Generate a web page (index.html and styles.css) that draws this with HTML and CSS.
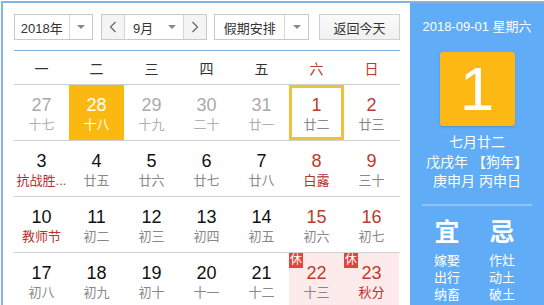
FILE: index.html
```html
<!DOCTYPE html>
<html lang="zh-CN">
<head>
  <meta charset="UTF-8">
  <title>万年历</title>
  <link rel="stylesheet" href="styles.css">
</head>
<body>
  <div class="calendar">
    <div class="main">
      <div class="toolbar">
        <div class="select year-select">
          <span class="select-text">2018年</span>
          <span class="select-arrow"><i class="caret"></i></span>
        </div>
        <div class="month-group">
          <span class="nav-btn">
            <svg width="8" height="12" viewBox="0 0 8 12"><polyline points="6.5,1 1.5,6 6.5,11" fill="none" stroke="#666" stroke-width="1.2"/></svg>
          </span>
          <div class="select month-select">
            <span class="select-text">9月</span>
            <span class="select-arrow no-line"><i class="caret"></i></span>
          </div>
          <span class="nav-btn">
            <svg width="8" height="12" viewBox="0 0 8 12"><polyline points="1.5,1 6.5,6 1.5,11" fill="none" stroke="#666" stroke-width="1.2"/></svg>
          </span>
        </div>
        <div class="select holiday-select">
          <span class="select-text">假期安排</span>
          <span class="select-arrow"><i class="caret"></i></span>
        </div>
        <button class="today-btn">返回今天</button>
      </div>

      <div class="week-head">
        <span>一</span><span>二</span><span>三</span><span>四</span><span>五</span><span class="red">六</span><span class="red">日</span>
      </div>

      <div class="days">
        <div class="row">
          <div class="cell other"><b>27</b><em>十七</em></div>
          <div class="cell selected"><b>28</b><em>十八</em></div>
          <div class="cell other"><b>29</b><em>十九</em></div>
          <div class="cell other"><b>30</b><em>二十</em></div>
          <div class="cell other"><b>31</b><em>廿一</em></div>
          <div class="cell weekend today"><b>1</b><em>廿二</em></div>
          <div class="cell weekend"><b>2</b><em>廿三</em></div>
        </div>
        <div class="row">
          <div class="cell"><b>3</b><em class="fest">抗战胜...</em></div>
          <div class="cell"><b>4</b><em>廿五</em></div>
          <div class="cell"><b>5</b><em>廿六</em></div>
          <div class="cell"><b>6</b><em>廿七</em></div>
          <div class="cell"><b>7</b><em>廿八</em></div>
          <div class="cell weekend"><b>8</b><em class="fest">白露</em></div>
          <div class="cell weekend"><b>9</b><em>三十</em></div>
        </div>
        <div class="row">
          <div class="cell"><b>10</b><em class="fest">教师节</em></div>
          <div class="cell"><b>11</b><em>初二</em></div>
          <div class="cell"><b>12</b><em>初三</em></div>
          <div class="cell"><b>13</b><em>初四</em></div>
          <div class="cell"><b>14</b><em>初五</em></div>
          <div class="cell weekend"><b>15</b><em>初六</em></div>
          <div class="cell weekend"><b>16</b><em>初七</em></div>
        </div>
        <div class="row">
          <div class="cell"><b>17</b><em>初八</em></div>
          <div class="cell"><b>18</b><em>初九</em></div>
          <div class="cell"><b>19</b><em>初十</em></div>
          <div class="cell"><b>20</b><em>十一</em></div>
          <div class="cell"><b>21</b><em>十二</em></div>
          <div class="cell weekend rest"><span class="badge">休</span><b>22</b><em>十三</em></div>
          <div class="cell weekend rest"><span class="badge">休</span><b>23</b><em class="fest">秋分</em></div>
        </div>
      </div>
    </div>

    <div class="side">
      <p class="side-date">2018-09-01 星期六</p>
      <div class="big-day">1</div>
      <div class="lunar">
        <p>七月廿二</p>
        <p>戊戌年 【狗年】</p>
        <p>庚申月 丙申日</p>
      </div>
      <div class="side-line"></div>
      <div class="yiji">
        <div class="yiji-col">
          <strong>宜</strong>
          <span>嫁娶</span>
          <span>出行</span>
          <span>纳畜</span>
        </div>
        <div class="yiji-col">
          <strong>忌</strong>
          <span>作灶</span>
          <span>动土</span>
          <span>破土</span>
        </div>
      </div>
    </div>
  </div>
</body>
</html>
```

FILE: styles.css
```css
body {
  margin: 0;
  padding: 0;
  font-family: "Liberation Sans", "Noto Sans CJK SC", sans-serif;
  background: #fff;
  overflow: hidden;
}
p {
  margin: 0;
}
.calendar {
  display: flex;
  width: 544px;
  height: 304px;
  box-sizing: border-box;
  border-left: 2px solid #82b5e6;
  border-top: 2px solid #82b5e6;
  margin-left: 1px;
  margin-top: 1px;
  overflow: hidden;
}
.main {
  width: 407px;
  padding: 11px 10px 0 11px;
  box-sizing: border-box;
}

/* toolbar */
.toolbar {
  display: flex;
  height: 26px;
}
.select {
  display: flex;
  height: 26px;
  box-sizing: border-box;
  border: 1px solid #c9c9c9;
  background: #fff;
  font-size: 13px;
  color: #333;
}
.select-text {
  display: flex;
  align-items: center;
  justify-content: center;
}
.select-arrow {
  display: flex;
  align-items: center;
  justify-content: center;
  width: 23px;
  border-left: 1px solid #d6d6d6;
}
.select-arrow.no-line {
  border-left: none;
}
.caret {
  width: 0;
  height: 0;
  border-left: 4px solid transparent;
  border-right: 4px solid transparent;
  border-top: 4px solid #888;
}
.year-select {
  width: 79px;
}
.year-select .select-text {
  width: 55px;
}
.month-group {
  display: flex;
  margin-left: 8px;
  height: 26px;
  box-sizing: border-box;
  border: 1px solid #c9c9c9;
}
.nav-btn {
  display: flex;
  align-items: center;
  justify-content: center;
  width: 22px;
  background: #f4f4f4;
}
.month-select {
  width: 60px;
  border-top: none;
  border-bottom: none;
  height: 24px;
  border-color: #d6d6d6;
}
.month-select .select-text {
  width: 38px;
}
.holiday-select {
  width: 95px;
  margin-left: 7px;
}
.holiday-select .select-text {
  width: 71px;
}
.today-btn {
  width: 81px;
  height: 26px;
  margin-left: 10px;
  padding: 0;
  border: 1px solid #d0d0d0;
  background: linear-gradient(#fafafa, #f0f0f0);
  font-family: inherit;
  font-size: 13px;
  color: #333;
}

/* week header */
.week-head {
  display: grid;
  grid-template-columns: repeat(7, 55px);
  margin-top: 10px;
  height: 33px;
  border-top: 1px solid #7eb1e3;
  border-bottom: 1px solid #cfcfcf;
  font-size: 14px;
  color: #333;
}
.week-head span {
  display: flex;
  align-items: center;
  justify-content: center;
}
.week-head .red {
  color: #c0392b;
}

/* day grid */
.row {
  display: grid;
  grid-template-columns: repeat(7, 55px);
  height: 55px;
  border-bottom: 1px solid #d2d2d2;
}
.cell {
  position: relative;
  display: flex;
  flex-direction: column;
  align-items: center;
  padding-top: 9px;
  box-sizing: border-box;
}
.cell b {
  font-weight: normal;
  font-size: 18px;
  line-height: 22px;
  color: #111;
}
.cell em {
  font-style: normal;
  font-size: 13px;
  line-height: 18px;
  color: #888;
  white-space: nowrap;
}
.cell.other b {
  color: #aaa;
}
.cell.other em {
  color: #b0b0b0;
}
.cell.weekend b {
  color: #c0392b;
}
.cell em.fest {
  color: #b8322b;
}
.cell.selected {
  background: #fbb811;
}
.cell.selected b,
.cell.selected em {
  color: #fff;
}
.cell.today {
  box-shadow: inset 0 0 0 3px #f0c13a;
}
.cell.rest {
  background: #fdeaea;
}
.badge {
  position: absolute;
  left: 0;
  top: 0;
  width: 14px;
  height: 15px;
  background: #e2453c;
  color: #fff;
  font-size: 12px;
  line-height: 15px;
  text-align: center;
}

/* side panel */
.side {
  width: 134px;
  margin-top: -3px;
  background: #60acf6;
  color: #fff;
  display: flex;
  flex-direction: column;
  align-items: center;
}
.side-date {
  margin-top: 19px;
  font-size: 13px;
  line-height: 16px;
}
.big-day {
  width: 75px;
  height: 74px;
  margin-top: 17px;
  background: #fdb813;
  border-radius: 3px;
  box-shadow: 0 1px 2px rgba(0, 0, 0, 0.15);
  font-family: "Liberation Sans", sans-serif;
  font-size: 62px;
  line-height: 74px;
  text-align: center;
}
.lunar {
  margin-top: 7px;
  text-align: center;
  font-size: 14px;
  line-height: 19.5px;
}
.side-line {
  width: 110px;
  height: 2px;
  margin-top: 12px;
  background: #8fc5f8;
}
.yiji {
  display: grid;
  grid-template-columns: 55px 55px;
  margin-top: 11px;
  margin-right: 5px;
}
.yiji-col {
  display: flex;
  flex-direction: column;
  align-items: center;
}
.yiji-col strong {
  font-size: 25px;
  line-height: 30px;
  margin-bottom: 5px;
}
.yiji-col span {
  font-size: 13px;
  line-height: 17px;
}
```
